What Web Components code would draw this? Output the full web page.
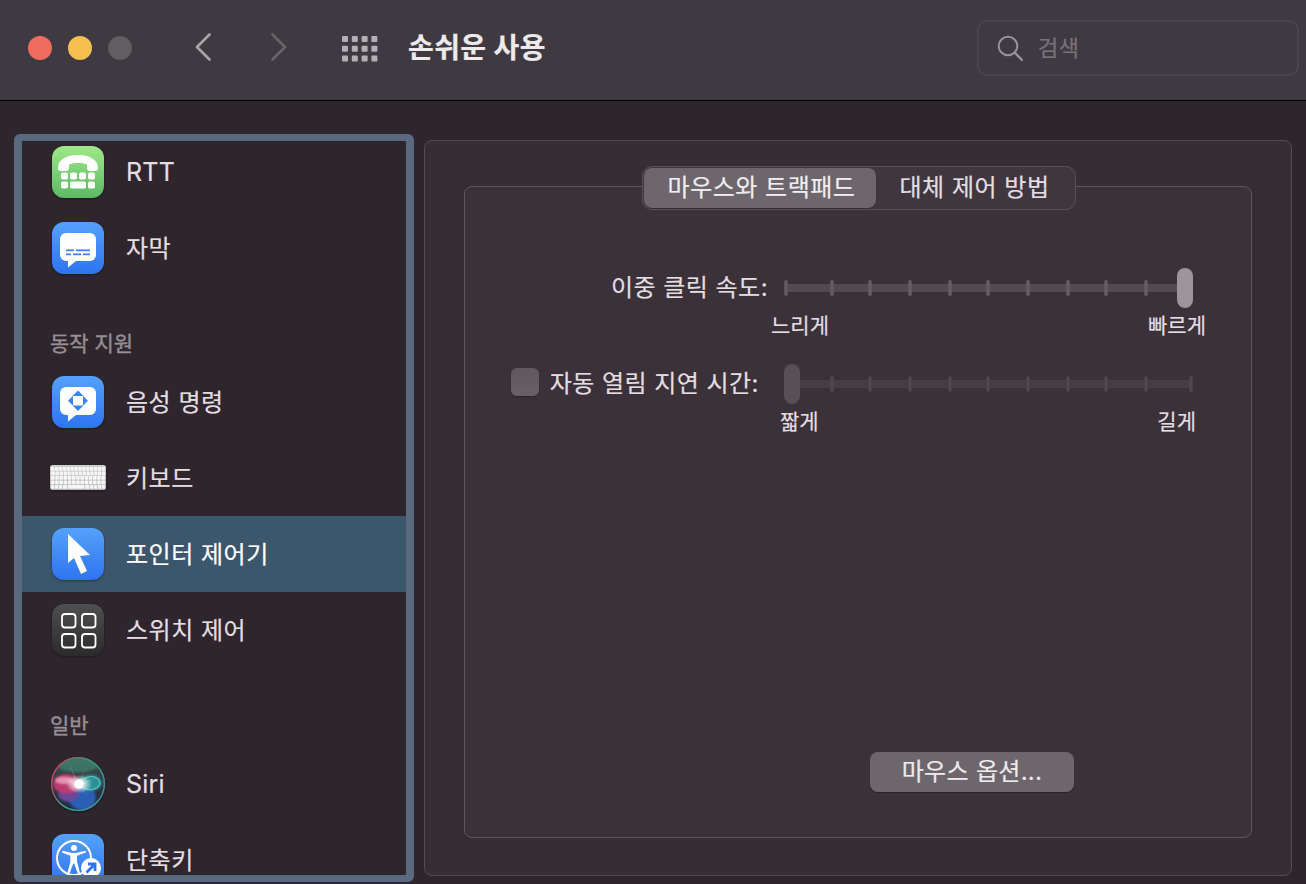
<!DOCTYPE html>
<html lang="ko">
<head>
<meta charset="utf-8">
<title>손쉬운 사용</title>
<style>
    html, body { margin: 0; height: 100%; }
    body {
        background: #2e252d;
        color: #e2dee1;
        font-family: "Inter", "Noto Sans CJK KR", sans-serif;
        -webkit-text-stroke: .2px;
        overflow: hidden;
    }
</style>
</head>
<body>
<mac-titlebar title-text="손쉬운 사용" placeholder="검색"></mac-titlebar>
<prefs-body>
    <side-bar slot="side">
        <side-item icon="rtt" latin>RTT</side-item>
        <side-item icon="captions">자막</side-item>
        <side-heading>동작 지원</side-heading>
        <side-item icon="voice">음성 명령</side-item>
        <side-item icon="keyboard">키보드</side-item>
        <side-item icon="pointer" selected>포인터 제어기</side-item>
        <side-item icon="switch">스위치 제어</side-item>
        <side-heading>일반</side-heading>
        <side-item icon="siri" latin>Siri</side-item>
        <side-item icon="shortcut">단축키</side-item>
    </side-bar>
    <pref-panel slot="main">
        <seg-control first="마우스와 트랙패드" second="대체 제어 방법"></seg-control>
        <slider-field label="이중 클릭 속도:" low="느리게" high="빠르게" value="max"
            style="--low-out:14px; --high-out:13px; --row-top:58px"></slider-field>
        <slider-field label="자동 열림 지연 시간:" low="짧게" high="길게" value="min"
            style="--low-out:5px; --high-out:3px; --row-top:26px; --label-end:9px">
            <mac-checkbox slot="check"></mac-checkbox>
        </slider-field>
        <mac-button>마우스 옵션...</mac-button>
    </pref-panel>
</prefs-body>

<script>
// all icons sit in a 52x52 box
const bubble = 'M14 11h24a6 6 0 0 1 6 6v16a6 6 0 0 1-6 6H24l-8 6.500v-6.500h-2a6 6 0 0 1-6-6V17a6 6 0 0 1 6-6z';

function keyboardKeys() {
    let out = '';
    const rowY = [15, 19.500, 24, 28.500, 33];
    const rows = [
        Array(14).fill(3.2),
        [4.5, ...Array(12).fill(3.1), 3.2],
        Array(13).fill(3.5),
        Array(13).fill(3.5),
        [3.2, 3.2, 3.2, 4.2, 16.9, 4.2, 3.2, 3.2, 3.2, 3.2]
    ];
    rowY.forEach((y, r) => {
        let x = -1;
        rows[r].forEach(w => {
            out += `<rect x="${x}" y="${y}" width="${w}" height="3.700" rx=".5" fill="#f6f6f6"/>`;
            x += w + 0.7;
        });
    });
    return out;
}

const ICONS = {
    rtt: `
        <defs><linearGradient id="g" x1="0" y1="0" x2="0" y2="1"><stop offset="0" stop-color="#9fe888"/><stop offset="1" stop-color="#5cb865"/></linearGradient></defs>
        <rect width="52" height="52" rx="12" fill="url(#g)"/>
        <path fill="#fff" d="M6 22C6 13 15 9 26 9s20 4 20 13c0 2-1 3-3 3h-5c-2 0-3-1-3-3v-3c0-1-4-2-9-2s-9 1-9 2v3c0 2-1 3-3 3H9c-2 0-3-1-3-3z"/>
        <g fill="#fff">
            <rect x="9" y="26.500" width="7" height="7" rx="1.800"/><rect x="18" y="26.500" width="7" height="7" rx="1.800"/>
            <rect x="27" y="26.500" width="7" height="7" rx="1.800"/><rect x="36" y="26.500" width="7" height="7" rx="1.800"/>
            <rect x="9" y="35.500" width="7" height="7" rx="1.800"/><rect x="18" y="35.500" width="16" height="7" rx="1.800"/>
            <rect x="36" y="35.500" width="7" height="7" rx="1.800"/>
        </g>`,
    captions: `
        <defs><linearGradient id="g" x1="0" y1="0" x2="0" y2="1"><stop offset="0" stop-color="#54a1fb"/><stop offset="1" stop-color="#2f74f0"/></linearGradient></defs>
        <rect width="52" height="52" rx="12" fill="url(#g)"/>
        <path fill="#fff" d="${bubble}"/>
        <g fill="#3b7ff0">
            <rect x="14" y="27.500" width="8" height="1.700"/><rect x="24" y="27.500" width="14" height="1.700"/>
            <rect x="14" y="31.500" width="5" height="1.700"/><rect x="21" y="31.500" width="8" height="1.700"/><rect x="31" y="31.500" width="7" height="1.700"/>
        </g>`,
    voice: `
        <defs><linearGradient id="g" x1="0" y1="0" x2="0" y2="1"><stop offset="0" stop-color="#54a1fb"/><stop offset="1" stop-color="#2f74f0"/></linearGradient></defs>
        <rect width="52" height="52" rx="12" fill="url(#g)"/>
        <path fill="#fff" d="${bubble}"/>
        <g fill="#3b85f3">
            <path d="M26 14.500l5.500 5.500h-11z"/><path d="M26 35l5.500-5.500h-11z"/>
            <path d="M16 24.700l5-5v10z"/><path d="M36 24.700l-5-5v10z"/>
        </g>`,
    keyboard: `
        <defs><linearGradient id="g" x1="0" y1="0" x2="0" y2="1"><stop offset="0" stop-color="#cfcfcf"/><stop offset="1" stop-color="#b4b4b4"/></linearGradient></defs>
        <rect x="-2" y="13" width="56" height="25" rx="2.500" fill="url(#g)"/>
        ${keyboardKeys()}`,
    pointer: `
        <defs><linearGradient id="g" x1="0" y1="0" x2="0" y2="1"><stop offset="0" stop-color="#54a1fb"/><stop offset="1" stop-color="#2f74f0"/></linearGradient></defs>
        <rect width="52" height="52" rx="12" fill="url(#g)"/>
        <polygon fill="#fff" points="16,6 38,27 28,28 35,43 29,46 22,30 16,35"/>`,
    switch: `
        <defs><linearGradient id="g" x1="0" y1="0" x2="0" y2="1"><stop offset="0" stop-color="#4f4f4f"/><stop offset="1" stop-color="#2b2b2b"/></linearGradient></defs>
        <rect width="52" height="52" rx="12" fill="url(#g)"/>
        <g fill="none" stroke="#fff" stroke-width="1.800">
            <rect x="10" y="10" width="13.500" height="13.500" rx="3"/><rect x="30" y="10" width="13.500" height="13.500" rx="3"/>
            <rect x="10" y="30" width="13.500" height="13.500" rx="3"/><rect x="30" y="30" width="13.500" height="13.500" rx="3"/>
        </g>`,
    siri: `
        <defs>
            <linearGradient id="b" x1="0" y1="0" x2="0" y2="1"><stop offset="0" stop-color="#3d5a55"/><stop offset=".5" stop-color="#34343f"/><stop offset="1" stop-color="#1f2b4a"/></linearGradient>
            <linearGradient id="r" x1="0" y1=".2" x2="1" y2=".8"><stop offset="0" stop-color="#d83a58"/><stop offset=".5" stop-color="#35a077"/><stop offset="1" stop-color="#3a93a5"/></linearGradient>
            <radialGradient id="w"><stop offset="0" stop-color="#fff"/><stop offset=".35" stop-color="#fff" stop-opacity=".8"/><stop offset="1" stop-color="#fff" stop-opacity="0"/></radialGradient>
            <filter id="f" x="-30%" y="-30%" width="160%" height="160%"><feGaussianBlur stdDeviation="1.200"/></filter>
            <filter id="f2" x="-30%" y="-30%" width="160%" height="160%"><feGaussianBlur stdDeviation=".5"/></filter>
            <clipPath id="c"><circle cx="26" cy="26" r="26"/></clipPath>
        </defs>
        <g transform="translate(-1 -1) scale(1.038)">
        <circle cx="26" cy="26" r="26" fill="url(#b)"/>
        <g clip-path="url(#c)">
            <ellipse cx="26" cy="7" rx="20" ry="8" fill="#3f9278" opacity=".55" filter="url(#f)"/>
            <ellipse cx="30" cy="39" rx="13" ry="12" fill="#2a5fb5" filter="url(#f)"/>
            <ellipse cx="17" cy="36" rx="10" ry="7" fill="#6a4a9a" filter="url(#f)"/>
            <ellipse cx="15" cy="26" rx="13" ry="9.500" fill="#bb3a6e" filter="url(#f)"/>
            <ellipse cx="13" cy="22.500" rx="9" ry="3.500" fill="#e595b2" filter="url(#f)"/>
            <ellipse cx="38" cy="25" rx="11" ry="8" fill="#2b8f96" filter="url(#f)"/>
            <path d="M28 25C33 17 44 17 47 24 48 30 38 34 30 29" fill="none" stroke="#5fd0c0" stroke-width="1.200" opacity=".8" filter="url(#f2)"/>
            <path d="M26 26L18 7 23 21zM26 26L34 9 29 21zM26 26L44 20 31 25zM26 26L36 39 29 29z" fill="#fff" opacity=".35" filter="url(#f2)"/>
            <ellipse cx="27" cy="26" rx="13" ry="9" fill="url(#w)"/>
            <circle cx="27" cy="26" r="4.500" fill="#fff" filter="url(#f2)"/>
        </g>
        <circle cx="26" cy="26" r="25.400" fill="none" stroke="url(#r)" stroke-width="1.400"/>
        </g>`,
    shortcut: `
        <defs><linearGradient id="g" x1="0" y1="0" x2="0" y2="1"><stop offset="0" stop-color="#54a1fb"/><stop offset="1" stop-color="#2f74f0"/></linearGradient></defs>
        <rect width="52" height="52" rx="12" fill="url(#g)"/>
        <circle cx="22" cy="24" r="17" fill="none" stroke="#fff" stroke-width="2"/>
        <circle cx="22" cy="14" r="3" fill="#fff"/>
        <path fill="#fff" d="M10 18.500l.6-1.800 9.400 2.300h4l9.400-2.300.6 1.800-9 3.300v6l3 11-2.200.7-3.600-10h-1l-3.600 10-2.200-.7 3-11v-6z"/>
        <circle cx="39" cy="34" r="10" fill="#fff"/>
        <path fill="none" stroke="#2f74f0" stroke-width="2.800" d="M34.500 38.500l8-8M36 30h7v7"/>`
};

class MacTitlebar extends HTMLElement {
    constructor() {
        super();
        this.attachShadow({ mode: 'open' });
    }

    connectedCallback() {
        const grid = [];
        for (let r = 0; r < 3; r++) {
            for (let c = 0; c < 4; c++) {
                grid.push(`<rect x="${c * 9.8}" y="${r * 9.7}" width="6" height="6" rx="1"/>`);
            }
        }
        this.shadowRoot.innerHTML = `
            <style>
                :host {
                    display: flex;
                    align-items: center;
                    height: 100px;
                    padding: 0 7px 0 28px;
                    background: #3f3a41;
                    border-bottom: 1px solid #000;
                }
                .lights { display: flex; gap: 16px; margin-right: 63px; margin-top: -4px; }
                .lights i { width: 24px; height: 24px; border-radius: 50%; }
                .nav { display: flex; gap: 60px; margin-right: 55px; }
                svg { display: block; }
                .grid { margin-right: 30px; fill: #b4afb4; }
                .title { font-size: 28px; font-weight: 700; color: #eeeaec; line-height: 36px; margin-top: -5px; letter-spacing: .4px; }
                .search {
                    margin-left: auto;
                    box-sizing: border-box;
                    width: 322px;
                    height: 56px;
                    margin-top: -5px;
                    display: flex;
                    align-items: center;
                    gap: 15px;
                    padding-left: 18px;
                    border: 2px solid #4a454c;
                    border-radius: 10px;
                    color: #78737a;
                    font-size: 22px;
                    letter-spacing: .4px;
                }
                .search span { margin-top: -3px; }
            </style>
            <div class="lights">
                <i style="background:#f16c60"></i><i style="background:#f5bf4f"></i><i style="background:#625d62"></i>
            </div>
            <div class="nav" style="margin-top:-6px">
                <svg width="16" height="28" viewBox="0 0 16 28"><path d="M14.500 1.500L2 14l12.500 12.500" fill="none" stroke="#a9a4a8" stroke-width="2.600" stroke-linecap="round" stroke-linejoin="round"/></svg>
                <svg width="16" height="28" viewBox="0 0 16 28"><path d="M1.500 1.500L14 14 1.500 26.500" fill="none" stroke="#696469" stroke-width="2.600" stroke-linecap="round" stroke-linejoin="round"/></svg>
            </div>
            <svg class="grid" width="36" height="26" viewBox="0 0 36 26" style="margin-top:-3px">${grid.join('')}</svg>
            <div class="title">${this.getAttribute('title-text')}</div>
            <div class="search">
                <svg width="26" height="26" viewBox="0 0 26 26"><circle cx="11" cy="11" r="9.300" fill="none" stroke="#98939a" stroke-width="2"/><path d="M17.500 17.500L25 25" stroke="#98939a" stroke-width="2.400" stroke-linecap="round"/></svg>
                <span>${this.getAttribute('placeholder')}</span>
            </div>
        `;
    }
}

class PrefsBody extends HTMLElement {
    constructor() {
        super();
        this.attachShadow({ mode: 'open' });
        this.shadowRoot.innerHTML = `
            <style>
                :host {
                    display: grid;
                    grid-template-columns: 400px 1fr;
                    gap: 10px;
                    height: 783px;
                    box-sizing: border-box;
                    padding: 33px 14px 2px;
                }
            </style>
            <slot name="side"></slot>
            <slot name="main"></slot>
        `;
    }
}

class SideBar extends HTMLElement {
    constructor() {
        super();
        this.attachShadow({ mode: 'open' });
        this.shadowRoot.innerHTML = `
            <style>
                :host {
                    display: block;
                    box-sizing: border-box;
                    height: 748px;
                    border: solid #5a6a7e;
                    border-width: 7px 8px;
                    border-radius: 6px;
                    overflow: hidden;
                }
                /* list is scrolled a little, first row is cut off */
                .list { margin-top: -7px; }
            </style>
            <div class="list"><slot></slot></div>
        `;
    }
}

class SideHeading extends HTMLElement {
    constructor() {
        super();
        this.attachShadow({ mode: 'open' });
        this.shadowRoot.innerHTML = `
            <style>
                :host {
                    display: flex;
                    align-items: flex-end;
                    box-sizing: border-box;
                    height: 78px;
                    padding: 0 0 8px 28px;
                    color: #968f94;
                    font-size: 21px;
                    -webkit-text-stroke: .4px;
                    line-height: 24px;
                }
            </style>
            <slot></slot>
        `;
    }
}

class SideItem extends HTMLElement {
    constructor() {
        super();
        this.attachShadow({ mode: 'open' });
    }

    connectedCallback() {
        this.shadowRoot.innerHTML = `
            <style>
                :host {
                    display: flex;
                    align-items: center;
                    gap: 22px;
                    height: 76px;
                    padding-left: 30px;
                    font-size: 24px;
                    letter-spacing: .5px;
                    color: #e2dee1;
                }
                :host([selected]) { background: #3c566c; color: #fff; }
                :host([latin]) { font-size: 25px; letter-spacing: .2px; }
                span { margin-top: -4px; }
                :host([latin]) span { margin-top: 0; }
                svg { display: block; overflow: visible; filter: drop-shadow(0 1px 1px rgba(0,0,0,.35)); flex: none; }
            </style>
            <svg width="52" height="52" viewBox="0 0 52 52">${ICONS[this.getAttribute('icon')]}</svg>
            <span><slot></slot></span>
        `;
    }
}

class PrefPanel extends HTMLElement {
    constructor() {
        super();
        this.attachShadow({ mode: 'open' });
        this.shadowRoot.innerHTML = `
            <style>
                :host {
                    display: flex;
                    box-sizing: border-box;
                    height: 736px;
                    margin-top: 6px;
                    padding: 45px 39px 37px;
                    background: #372e35;
                    border: 1px solid #534b53;
                    border-radius: 8px;
                }
                .box {
                    flex: 1;
                    display: flex;
                    flex-direction: column;
                    border: 1px solid #5e565e;
                    border-radius: 8px;
                    background: #3b3138;
                }
            </style>
            <div class="box"><slot></slot></div>
        `;
    }
}

class SegControl extends HTMLElement {
    constructor() {
        super();
        this.attachShadow({ mode: 'open' });
    }

    connectedCallback() {
        this.shadowRoot.innerHTML = `
            <style>
                :host {
                    display: flex;
                    align-self: center;
                    box-sizing: border-box;
                    width: 434px;
                    height: 44px;
                    margin: -21px 0 0 1px;
                    padding: 1px;
                    background: #40373e;
                    border: 1px solid #5a525a;
                    border-radius: 10px;
                    font-size: 24px;
                    letter-spacing: .5px;
                    color: #e2dee1;
                }
                div { display: flex; align-items: center; justify-content: center; padding-bottom: 5px; box-sizing: border-box; }
                .on {
                    width: 232px;
                    padding-left: 4px;
                    background: #6d666d;
                    border-radius: 8px;
                    color: #f0edef;
                    box-shadow: 0 1px 1px rgba(0,0,0,.25);
                }
                .off { flex: 1; }
            </style>
            <div class="on">${this.getAttribute('first')}</div>
            <div class="off">${this.getAttribute('second')}</div>
        `;
    }
}

class SliderField extends HTMLElement {
    constructor() {
        super();
        this.attachShadow({ mode: 'open' });
    }

    connectedCallback() {
        const atMax = this.getAttribute('value') === 'max';
        const xs = [47, 85, 125, 165, 203, 243, 283, 321, 361];
        xs.push(atMax ? 1 : 406);
        const trackColor = atMax ? '#524a51' : '#463d45';
        const tickColor = atMax ? '#645c63' : '#50484f';
        const ticks = xs.map(x => `<rect x="${x - 1.75}" y="12" width="3.500" height="16" rx="1.750" fill="${tickColor}"/>`).join('');
        const thumb = atMax
            ? '<rect x="392" y="0" width="16" height="40" rx="8" fill="#9c969b"/>'
            : '<rect x="-1" y="0" width="16" height="40" rx="8" fill="#575057"/>';
        this.shadowRoot.innerHTML = `
            <style>
                :host {
                    display: grid;
                    grid-template-columns: 302px 408px;
                    column-gap: 18px;
                    margin-top: var(--row-top, 0);
                    font-size: 24px;
                    color: #e2dee1;
                }
                .label {
                    display: flex;
                    align-items: center;
                    justify-content: flex-end;
                    gap: 11px;
                    padding-right: var(--label-end, 0);
                    padding-bottom: 4px;
                    letter-spacing: .45px;
                }
                .label span { margin: -2px -1px 0 0; }
                svg { display: block; overflow: visible; }
                .ends {
                    grid-column: 2;
                    display: flex;
                    justify-content: space-between;
                    margin: 6px calc(var(--high-out) * -1) 0 calc(var(--low-out) * -1);
                    font-size: 21px;
                    line-height: 24px;
                }
            </style>
            <div class="label"><slot name="check"></slot><span>${this.getAttribute('label')}</span></div>
            <svg width="408" height="40" viewBox="0 0 408 40">
                <rect x="0" y="16" width="${atMax ? 400 : 406}" height="8" fill="${trackColor}"/>
                ${ticks}${thumb}
            </svg>
            <div class="ends"><span>${this.getAttribute('low')}</span><span>${this.getAttribute('high')}</span></div>
        `;
    }
}

class MacCheckbox extends HTMLElement {
    constructor() {
        super();
        this.attachShadow({ mode: 'open' });
        this.shadowRoot.innerHTML = `
            <style>
                :host {
                    display: block;
                    width: 28px;
                    height: 28px;
                    border-radius: 6px;
                    background: linear-gradient(#5f585f, #676067);
                    box-shadow: 0 1px 1px rgba(0,0,0,.3);
                }
            </style>
        `;
    }
}

class MacButton extends HTMLElement {
    constructor() {
        super();
        this.attachShadow({ mode: 'open' });
        this.shadowRoot.innerHTML = `
            <style>
                :host {
                    display: flex;
                    align-items: center;
                    justify-content: center;
                    align-self: flex-end;
                    box-sizing: border-box;
                    width: 204px;
                    height: 40px;
                    margin: auto 177px 45px 0;
                    padding-bottom: 6px;
                    background: #6d666d;
                    border-radius: 8px;
                    font-size: 24px;
                    letter-spacing: .3px;
                    color: #eeeaec;
                    box-shadow: 0 1px 1px rgba(0,0,0,.3);
                }
            </style>
            <slot></slot>
        `;
    }
}

customElements.define('mac-titlebar', MacTitlebar);
customElements.define('prefs-body', PrefsBody);
customElements.define('side-bar', SideBar);
customElements.define('side-heading', SideHeading);
customElements.define('side-item', SideItem);
customElements.define('pref-panel', PrefPanel);
customElements.define('seg-control', SegControl);
customElements.define('slider-field', SliderField);
customElements.define('mac-checkbox', MacCheckbox);
customElements.define('mac-button', MacButton);
</script>
</body>
</html>
